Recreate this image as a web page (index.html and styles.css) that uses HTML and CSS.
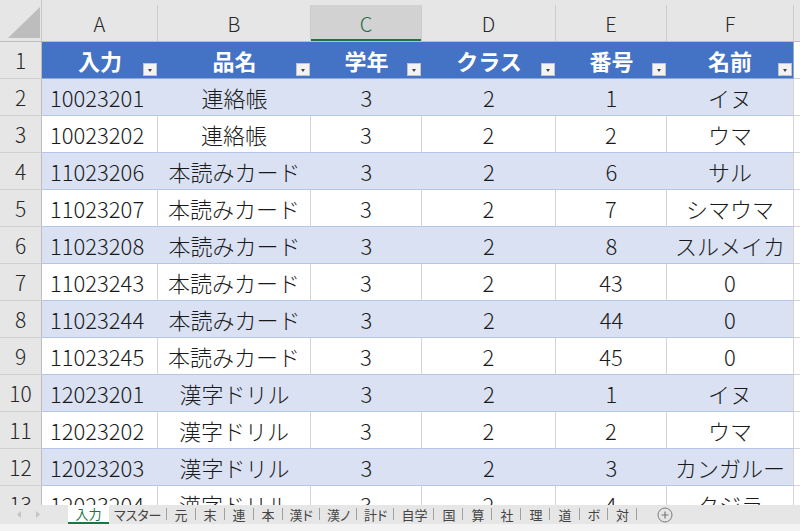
FILE: index.html
```html
<!DOCTYPE html>
<html lang="ja">
<head>
<meta charset="utf-8">
<link rel="stylesheet" href="styles.css">
</head>
<body>
<div class="app">
  <div class="sheet">
    <div class="colhead">
      <div class="corner"><svg width="42" height="41" viewBox="0 0 42 41"><polygon points="8,38 40,7 40,38" fill="#bdbdbd"/></svg></div>
      <div class="ch">A</div>
      <div class="ch">B</div>
      <div class="ch sel">C</div>
      <div class="ch">D</div>
      <div class="ch">E</div>
      <div class="ch">F</div>
      <div class="ch g"></div>
    </div>

    <div class="row h">
      <div class="rh">1</div>
      <div class="c">入力<span class="dd"></span></div>
      <div class="c">品名<span class="dd"></span></div>
      <div class="c">学年<span class="dd"></span></div>
      <div class="c">クラス<span class="dd"></span></div>
      <div class="c">番号<span class="dd"></span></div>
      <div class="c f">名前<span class="dd"></span></div>
      <div class="gc"></div>
    </div>

    <div class="row b">
      <div class="rh">2</div>
      <div class="c l">10023201</div><div class="c">連絡帳</div><div class="c">3</div><div class="c">2</div><div class="c">1</div><div class="c f">イヌ</div><div class="gc"></div>
    </div>
    <div class="row w">
      <div class="rh">3</div>
      <div class="c l">10023202</div><div class="c">連絡帳</div><div class="c">3</div><div class="c">2</div><div class="c">2</div><div class="c f">ウマ</div><div class="gc"></div>
    </div>
    <div class="row b">
      <div class="rh">4</div>
      <div class="c l">11023206</div><div class="c">本読みカード</div><div class="c">3</div><div class="c">2</div><div class="c">6</div><div class="c f">サル</div><div class="gc"></div>
    </div>
    <div class="row w">
      <div class="rh">5</div>
      <div class="c l">11023207</div><div class="c">本読みカード</div><div class="c">3</div><div class="c">2</div><div class="c">7</div><div class="c f">シマウマ</div><div class="gc"></div>
    </div>
    <div class="row b">
      <div class="rh">6</div>
      <div class="c l">11023208</div><div class="c">本読みカード</div><div class="c">3</div><div class="c">2</div><div class="c">8</div><div class="c f">スルメイカ</div><div class="gc"></div>
    </div>
    <div class="row w">
      <div class="rh">7</div>
      <div class="c l">11023243</div><div class="c">本読みカード</div><div class="c">3</div><div class="c">2</div><div class="c">43</div><div class="c f">0</div><div class="gc"></div>
    </div>
    <div class="row b">
      <div class="rh">8</div>
      <div class="c l">11023244</div><div class="c">本読みカード</div><div class="c">3</div><div class="c">2</div><div class="c">44</div><div class="c f">0</div><div class="gc"></div>
    </div>
    <div class="row w">
      <div class="rh">9</div>
      <div class="c l">11023245</div><div class="c">本読みカード</div><div class="c">3</div><div class="c">2</div><div class="c">45</div><div class="c f">0</div><div class="gc"></div>
    </div>
    <div class="row b">
      <div class="rh">10</div>
      <div class="c l">12023201</div><div class="c">漢字ドリル</div><div class="c">3</div><div class="c">2</div><div class="c">1</div><div class="c f">イヌ</div><div class="gc"></div>
    </div>
    <div class="row w">
      <div class="rh">11</div>
      <div class="c l">12023202</div><div class="c">漢字ドリル</div><div class="c">3</div><div class="c">2</div><div class="c">2</div><div class="c f">ウマ</div><div class="gc"></div>
    </div>
    <div class="row b">
      <div class="rh">12</div>
      <div class="c l">12023203</div><div class="c">漢字ドリル</div><div class="c">3</div><div class="c">2</div><div class="c">3</div><div class="c f">カンガルー</div><div class="gc"></div>
    </div>
    <div class="row w">
      <div class="rh">13</div>
      <div class="c l">12023204</div><div class="c">漢字ドリル</div><div class="c">3</div><div class="c">2</div><div class="c">4</div><div class="c f">クジラ</div><div class="gc"></div>
    </div>
  </div>

  <div class="tabbar">
    <div class="nav">
      <svg width="68" height="19" viewBox="0 0 68 19"><polygon points="21,6 21,13 17,9.5" fill="#c4c4c4"/><polygon points="36,6 36,13 40,9.5" fill="#c4c4c4"/></svg>
    </div>
    <div class="tab active">入力</div>
    <div class="tab sep wide">マスター</div>
    <div class="tab sep">元</div>
    <div class="tab sep">末</div>
    <div class="tab sep">連</div>
    <div class="tab sep">本</div>
    <div class="tab sep two">漢ド</div>
    <div class="tab sep two">漢ノ</div>
    <div class="tab sep two">計ド</div>
    <div class="tab sep two">自学</div>
    <div class="tab sep">国</div>
    <div class="tab sep">算</div>
    <div class="tab sep">社</div>
    <div class="tab sep">理</div>
    <div class="tab sep">道</div>
    <div class="tab sep">ボ</div>
    <div class="tab sep">対</div>
    <div class="add"><svg width="16" height="16" viewBox="0 0 16 16"><circle cx="8" cy="8" r="7" fill="none" stroke="#7a7a7a" stroke-width="1"/><path d="M8 4.5v7M4.5 8h7" stroke="#7a7a7a" stroke-width="1.2"/></svg></div>
  </div>
  <div class="status"></div>
</div>
</body>
</html>
```

FILE: styles.css
```css
* { box-sizing: border-box; }
html, body { margin: 0; padding: 0; }
body {
  width: 800px;
  height: 531px;
  overflow: hidden;
  background: #ffffff;
  font-family: "Noto Sans CJK JP", "Noto Sans", sans-serif;
  color: #1a1a1a;
}
.app {
  display: flex;
  flex-direction: column;
  height: 531px;
}
.sheet {
  height: 505px;
  flex: none;
  overflow: hidden;
}
.colhead {
  display: grid;
  grid-template-columns: 42px 116px 153px 111px 134px 111px 127px 1fr;
  height: 42px;
  background: #e6e6e6;
  border-bottom: 1px solid #bdbdbd;
}
.corner { height: 41px; border-right: 1px solid #c8c8c8; }
.corner svg { display: block; }
.ch {
  margin-top: 5px;
  border-right: 1px solid #cccccc;
  display: flex;
  align-items: center;
  justify-content: center;
  font-size: 20px;
  font-weight: 300;
  color: #262626;
}
.ch.sel {
  background: #d2d2d2;
  color: #1d6b40;
  box-shadow: inset 0 -2px 0 #217346;
}
.ch.g { border-right: none; }
.row {
  display: grid;
  grid-template-columns: 42px 116px 153px 111px 134px 111px 127px 1fr;
  height: 37px;
}
.rh {
  background: #e6e6e6;
  border-right: 1px solid #bdbdbd;
  border-bottom: 1px solid #d0d0d0;
  display: flex;
  align-items: center;
  justify-content: center;
  font-size: 21px;
  font-weight: 300;
  color: #262626;
}
.c {
  display: flex;
  align-items: center;
  justify-content: center;
  font-size: 22px;
  font-weight: 300;
  white-space: nowrap;
  border-bottom: 1px solid #b4c6e7;
  color: #1a1a1a;
}
.c.l { justify-content: flex-start; padding-left: 8px; }
.row.w .c { border-right: 1px solid #d4d4d4; }
.row.b .c { background: #d9e1f2; }
.c.f { border-right: 1px solid #d4d4d4; }
.row .gc { border-bottom: 1px solid #d4d4d4; }
.row.h .c {
  background: #4472c4;
  color: #ffffff;
  font-weight: bold;
  position: relative;
  border-bottom: 1px solid #8ea9db;
}
.row.h .c.f { border-right: 1px solid #8ea9db; }
.dd {
  position: absolute;
  right: 1px;
  bottom: 2px;
  width: 14px;
  height: 13px;
  background: #f3f3f3;
  border: 1px solid #c4c4c4;
}
.dd::after {
  content: "";
  position: absolute;
  left: 4px;
  top: 5px;
  border-left: 2.5px solid transparent;
  border-right: 2.5px solid transparent;
  border-top: 3px solid #444444;
}
.tabbar {
  height: 19px;
  flex: none;
  display: flex;
  align-items: stretch;
  background: #e6e6e6;
  font-size: 13px;
  color: #444444;
  font-feature-settings: "palt";
}
.nav { width: 68px; flex: none; }
.nav svg { display: block; }
.tab {
  position: relative;
  padding: 0 8px;
  display: flex;
  align-items: center;
  line-height: 1;
}
.tab.two { padding: 0 7px; }
.tab.wide { padding: 0 5px; }
.tab.active {
  background: #ffffff;
  color: #217346;
  border-bottom: 2px solid #217346;
  padding: 0 7.5px;
}
.tab.sep::after {
  content: "";
  position: absolute;
  right: 0;
  top: 3px;
  width: 1px;
  height: 12px;
  background: #a0a0a0;
}
.add {
  margin-left: 20px;
  display: flex;
  align-items: center;
}
.add svg { display: block; }
.status {
  flex: 1;
  background: #f3f3f3;
}
```
